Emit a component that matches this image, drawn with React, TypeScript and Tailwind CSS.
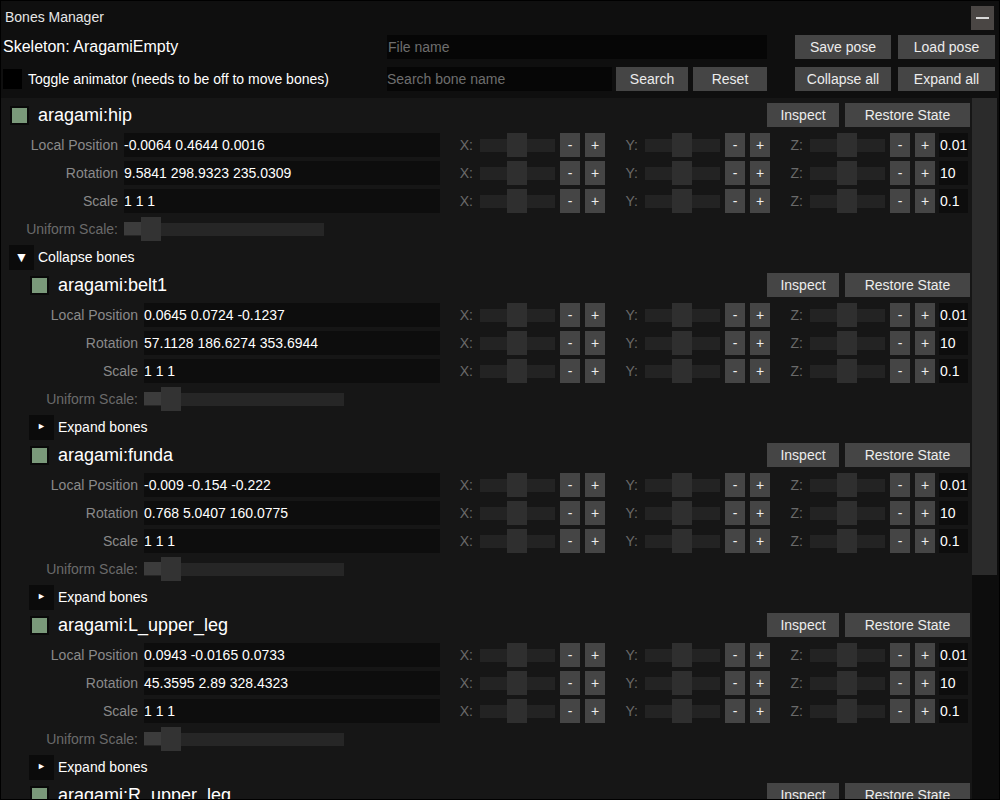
import React from "react";

type Bone = {
  name: string;
  level: 0 | 1;
  position: string;
  rotation: string;
  scale: string;
  open: boolean;
};

const BONES: Bone[] = [
  { name: "aragami:hip", level: 0, position: "-0.0064 0.4644 0.0016", rotation: "9.5841 298.9323 235.0309", scale: "1 1 1", open: true },
  { name: "aragami:belt1", level: 1, position: "0.0645 0.0724 -0.1237", rotation: "57.1128 186.6274 353.6944", scale: "1 1 1", open: false },
  { name: "aragami:funda", level: 1, position: "-0.009 -0.154 -0.222", rotation: "0.768 5.0407 160.0775", scale: "1 1 1", open: false },
  { name: "aragami:L_upper_leg", level: 1, position: "0.0943 -0.0165 0.0733", rotation: "45.3595 2.89 328.4323", scale: "1 1 1", open: false },
  { name: "aragami:R_upper_leg", level: 1, position: "0 0 0", rotation: "0 0 0", scale: "1 1 1", open: false },
];

function Btn(props: { label: string; className: string }) {
  return (
    <div className={"flex h-[24px] items-center justify-center bg-[#454545] text-[14px] text-[#ececec] " + props.className}>
      {props.label}
    </div>
  );
}

function AxisGroup(props: { axis: string }) {
  return (
    <div className="flex h-[24px] items-center">
      <div className="w-[40px] pr-[7px] text-right text-[14px] text-[#6a6a6a]">{props.axis}:</div>
      <div className="relative flex h-[24px] w-[75px] items-center">
        <div className="h-[13px] w-full bg-[#232323]" />
        <div className="absolute left-[27px] top-0 h-[24px] w-[20px] bg-[#2f2f2f]" />
      </div>
      <Btn label="-" className="ml-[5px] w-[20px] text-[13px]" />
      <Btn label="+" className="ml-[5px] w-[20px] text-[13px]" />
    </div>
  );
}

function PropRow(props: { label: string; value: string; step: string; level: 0 | 1 }) {
  return (
    <div className="flex h-[24px] items-center">
      <div className="flex w-[439px] items-center">
        <div className={"shrink-0 text-right text-[14px] text-[#8a8a8a] " + (props.level === 0 ? "w-[117px]" : "w-[137px]")}>
          {props.label}
        </div>
        <div className="ml-[6px] flex h-[24px] flex-1 items-center bg-[#0d0d0d] text-[14px] text-white">{props.value}</div>
      </div>
      <AxisGroup axis="X" />
      <AxisGroup axis="Y" />
      <AxisGroup axis="Z" />
      <div className="ml-[4px] flex h-[24px] w-[29px] items-center bg-[#0d0d0d] pl-[1px] text-[14px] text-white">{props.step}</div>
    </div>
  );
}

function BoneBlock(props: { bone: Bone }) {
  const b = props.bone;
  const indent = b.level === 0 ? "ml-[9px]" : "ml-[29px]";
  return (
    <>
      <div className="mb-[2px] flex h-[24px] items-center">
        <div className={"h-[19px] w-[19px] shrink-0 border-2 border-[#0a0a0a] bg-[#7a997a] " + indent} />
        <div className="ml-[9px] text-[18px] text-white">{b.name}</div>
        <div className="flex-1" />
        <Btn label="Inspect" className="w-[72px]" />
        <Btn label="Restore State" className="ml-[6px] mr-[2px] w-[125px]" />
      </div>
      <PropRow label="Local Position" value={b.position} step="0.01" level={b.level} />
      <PropRow label="Rotation" value={b.rotation} step="10" level={b.level} />
      <PropRow label="Scale" value={b.scale} step="0.1" level={b.level} />
      <div className="flex h-[24px] items-center">
        <div className={"shrink-0 text-right text-[14px] text-[#6a6a6a] " + (b.level === 0 ? "w-[117px]" : "w-[137px]")}>
          Uniform Scale:
        </div>
        <div className="relative ml-[6px] flex h-[24px] w-[200px] items-center">
          <div className="h-[13px] w-full bg-[#262626]" />
          <div className="absolute left-0 top-[5px] h-[13px] w-[18px] bg-[#3c3c3c]" />
          <div className="absolute left-[17px] top-0 h-[24px] w-[20px] bg-[#333333]" />
        </div>
      </div>
      <div className="flex h-[24px] items-center">
        <div className={"flex h-[25px] w-[25px] shrink-0 items-center justify-center bg-[#0b0b0b] text-white " + (b.level === 0 ? "ml-[8px]" : "ml-[28px]")}>
          {b.open ? <span className="text-[14px]">▼</span> : <span className="text-[9px]">►</span>}
        </div>
        <div className="ml-[4px] text-[14px] text-white">{b.open ? "Collapse bones" : "Expand bones"}</div>
      </div>
    </>
  );
}

export default function App() {
  return (
    <div
      className="flex h-[800px] w-[1000px] flex-col overflow-hidden border border-black bg-[#0f0f0f]"
      style={{ fontFamily: '"Liberation Sans", Arial, sans-serif' }}
    >
      <div className="flex h-[29px] items-center justify-between">
        <div className="pl-[4px] pt-[3px] text-[14px] text-[#e6e6e6]">Bones Manager</div>
        <div className="mr-[5px] mt-[4px] flex h-[24px] w-[23px] items-center justify-center bg-[#4a4644]">
          <div className="h-[2px] w-[13px] bg-[#d8d8d8]" />
        </div>
      </div>

      <div className="mt-[5px] flex h-[24px] items-center">
        <div className="w-[386px] pl-[2px] text-[16px] text-white">Skeleton: AragamiEmpty</div>
        <div className="flex h-[24px] w-[380px] items-center bg-[#060606] pl-[1px] text-[14px] text-[#6e6e6e]">File name</div>
        <div className="w-[28px]" />
        <Btn label="Save pose" className="w-[96px]" />
        <Btn label="Load pose" className="ml-[7px] w-[97px]" />
      </div>

      <div className="mt-[8px] flex h-[24px] items-center">
        <div className="flex w-[386px] items-center">
          <div className="ml-[2px] h-[20px] w-[19px] bg-black" />
          <div className="ml-[6px] text-[14px] text-white">Toggle animator (needs to be off to move bones)</div>
        </div>
        <div className="flex h-[24px] w-[225px] items-center bg-[#060606] text-[14px] text-[#6e6e6e]">Search bone name</div>
        <Btn label="Search" className="ml-[4px] w-[72px]" />
        <Btn label="Reset" className="ml-[5px] w-[74px]" />
        <div className="w-[28px]" />
        <Btn label="Collapse all" className="w-[96px]" />
        <Btn label="Expand all" className="ml-[7px] w-[97px]" />
      </div>

      <div className="mt-[7px] flex min-h-0 flex-1">
        <div className="flex w-[971px] flex-col gap-[4px] overflow-hidden bg-[#161616] pt-[5px]">
          {BONES.map((b) => (
            <BoneBlock key={b.name} bone={b} />
          ))}
        </div>
        <div className="flex-1 bg-[#0d0d0d]">
          <div className="h-[477px] w-[25px] bg-[#2b2b2b]" />
        </div>
      </div>
    </div>
  );
}
